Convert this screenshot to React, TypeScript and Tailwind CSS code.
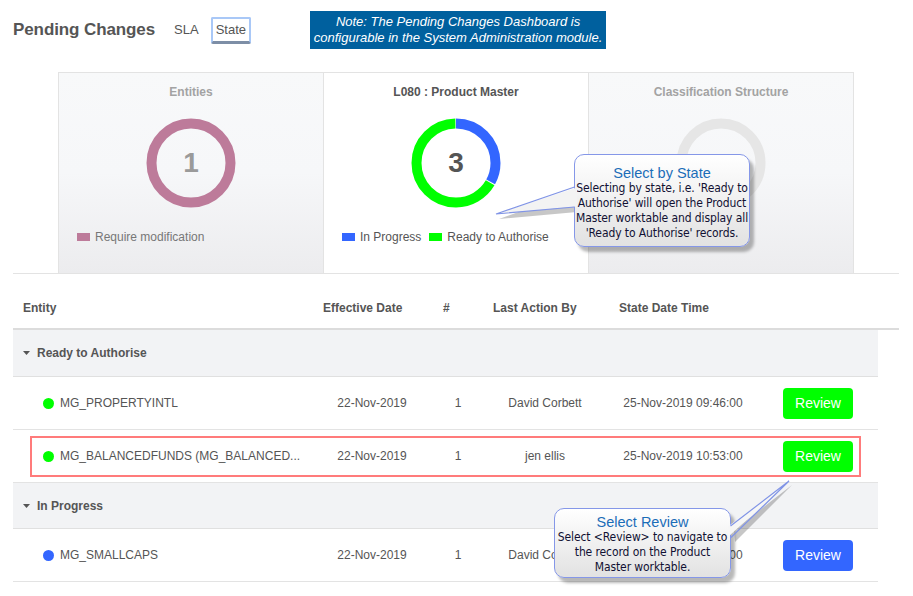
import React from "react";

const GREEN = "#00ff00";
const BLUE = "#3366ff";
const MAUVE = "#bd7b9a";

const C = 2 * Math.PI * 39.5;

function Donut({ kind, value }: { kind: "mauve" | "split" | "empty"; value?: string }) {
  return (
    <div className="relative w-[90px] h-[90px]">
      <svg width="90" height="90" viewBox="0 0 90 90">
        <g transform="rotate(-90 45 45)">
          {kind === "mauve" && (
            <circle cx="45" cy="45" r="39.5" fill="none" stroke={MAUVE} strokeWidth="10" />
          )}
          {kind === "empty" && (
            <circle cx="45" cy="45" r="39.5" fill="none" stroke="#e6e6e6" strokeWidth="10" />
          )}
          {kind === "split" && (
            <>
              <circle
                cx="45"
                cy="45"
                r="39.5"
                fill="none"
                stroke={BLUE}
                strokeWidth="10"
                strokeDasharray={`${C / 3 - 1} ${C}`}
                strokeDashoffset="0"
              />
              <circle
                cx="45"
                cy="45"
                r="39.5"
                fill="none"
                stroke={GREEN}
                strokeWidth="10"
                strokeDasharray={`${(2 * C) / 3 - 1} ${C}`}
                strokeDashoffset={-(C / 3)}
              />
            </>
          )}
        </g>
      </svg>
      {value && (
        <div
          className={`absolute inset-0 flex items-center justify-center text-[28px] font-bold ${
            kind === "split" ? "text-[#555]" : "text-[#9a9a9a]"
          }`}
        >
          {value}
        </div>
      )}
    </div>
  );
}

function Legend({ color, label, dark }: { color: string; label: string; dark?: boolean }) {
  return (
    <div className="flex items-center gap-[5px]">
      <span className="w-[13px] h-[8px]" style={{ backgroundColor: color }} />
      <span className={`text-[12px] leading-[16px] ${dark ? "text-[#555]" : "text-[#777]"}`}>{label}</span>
    </div>
  );
}

function Card({
  title,
  active,
  first,
  children,
}: {
  title: string;
  active?: boolean;
  first?: boolean;
  children: React.ReactNode;
}) {
  return (
    <div
      className={`w-[266px] h-[201px] border border-b-0 border-[#e3e3e3] flex flex-col items-center pt-[11px] ${
        first ? "" : "-ml-px"
      } ${active ? "bg-white" : "bg-gradient-to-b from-[#f8f9fa] via-[#f6f7f9] to-[#ececee]"}`}
    >
      <div
        className={`text-[12px] leading-[16px] font-bold ${active ? "text-[#555]" : "text-[#a3a3a3]"}`}
      >
        {title}
      </div>
      {children}
    </div>
  );
}

function Caret() {
  return (
    <svg width="7" height="4" viewBox="0 0 7 4" className="mr-[7px]">
      <path d="M0 0 L7 0 L3.5 4 Z" fill="#555" />
    </svg>
  );
}

type Row = {
  name: string;
  dot: string;
  date: string;
  n: string;
  by: string;
  time: string;
  btn: string;
  highlight?: boolean;
};

function DataRow({ r }: { r: Row }) {
  return (
    <div className="relative flex items-center h-[53px] border-b border-[#e3e3e3] text-[12px] text-[#555]">
      <div className="w-[310px] flex items-center pl-[30px] gap-[6px] whitespace-nowrap">
        <span className="w-[11px] h-[11px] rounded-full shrink-0" style={{ backgroundColor: r.dot }} />
        <span>{r.name}</span>
      </div>
      <div className="w-[98px] text-center">{r.date}</div>
      <div className="w-[74px] text-center">{r.n}</div>
      <div className="w-[100px] text-center">{r.by}</div>
      <div className="w-[176px] text-center">{r.time}</div>
      <div className="flex-1 pl-[12px]">
        <button
          className="w-[70px] h-[31px] rounded-[4px] text-white text-[14px]"
          style={{ backgroundColor: r.btn }}
        >
          Review
        </button>
      </div>
      {r.highlight && (
        <div className="absolute left-[17px] top-[6px] w-[831px] h-[41px] border-2 border-[#ff7b7b] pointer-events-none" />
      )}
    </div>
  );
}

function GroupRow({ label, h }: { label: string; h: string }) {
  return (
    <div className={`flex items-center ${h} bg-[#f2f3f5] border-b border-[#e0e0e0] pl-[10px]`}>
      <Caret />
      <span className="text-[12px] font-bold text-[#555]">{label}</span>
    </div>
  );
}

function Callout({
  className,
  title,
  lines,
}: {
  className: string;
  title: string;
  lines: string[];
}) {
  return (
    <div
      className={`absolute rounded-[10px] border border-[#8597e8] bg-gradient-to-b from-white to-[#e2e2e2] shadow-[4px_5px_3px_rgba(0,0,0,0.28)] flex flex-col items-center ${className}`}
    >
      <div className="text-[14.5px] leading-[16px] text-[#1b6db8]">{title}</div>
      <div
        className="text-[12px] leading-[15px] tracking-[-0.1px] text-[#111133] text-center whitespace-nowrap"
        style={{ fontFamily: '"DejaVu Sans Condensed", "Liberation Sans", sans-serif' }}
      >
        {lines.map((l, i) => (
          <div key={i}>{l}</div>
        ))}
      </div>
    </div>
  );
}

export default function App() {
  const ready: Row[] = [
    {
      name: "MG_PROPERTYINTL",
      dot: GREEN,
      date: "22-Nov-2019",
      n: "1",
      by: "David Corbett",
      time: "25-Nov-2019 09:46:00",
      btn: GREEN,
    },
    {
      name: "MG_BALANCEDFUNDS (MG_BALANCED...",
      dot: GREEN,
      date: "22-Nov-2019",
      n: "1",
      by: "jen ellis",
      time: "25-Nov-2019 10:53:00",
      btn: GREEN,
      highlight: true,
    },
  ];
  const progress: Row[] = [
    {
      name: "MG_SMALLCAPS",
      dot: BLUE,
      date: "22-Nov-2019",
      n: "1",
      by: "David Corbett",
      time: "25-Nov-2019 09:46:00",
      btn: BLUE,
    },
  ];

  return (
    <div
      className="relative w-[913px] h-[596px] overflow-hidden bg-white"
      style={{ fontFamily: '"Liberation Sans", Arial, sans-serif' }}
    >
      {/* Header */}
      <div className="h-[60px] flex items-center pl-[13px]">
        <h1 className="text-[17px] font-bold text-[#555] tracking-[-0.1px]">Pending Changes</h1>
        <span className="ml-[19px] text-[13px] text-[#555]">SLA</span>
        <button className="ml-[12px] h-[27px] px-[3px] text-[13px] text-[#555] border-2 border-[#a9c8f7] border-b-[3px] border-b-[#7d8ea6] rounded-[2px]">
          State
        </button>
        <div className="ml-[59px] w-[296px] h-[38px] bg-[#00609e] text-white italic text-[13px] leading-[16px] flex flex-col items-center justify-center">
          <span>Note: The Pending Changes Dashboard is</span>
          <span>configurable in the System Administration module.</span>
        </div>
      </div>

      {/* Cards */}
      <div className="mt-[12px] mx-[13px] w-[886px] border-b border-[#e3e3e3] pl-[45px] flex">
        <Card title="Entities" first>
          <div className="mt-[18px]">
            <Donut kind="mauve" value="1" />
          </div>
          <div className="mt-[21px] self-stretch pl-[18px] flex">
            <Legend color={MAUVE} label="Require modification" />
          </div>
        </Card>
        <Card title="L080 : Product Master" active>
          <div className="mt-[18px]">
            <Donut kind="split" value="3" />
          </div>
          <div className="mt-[21px] self-stretch pl-[18px] flex gap-[8px]">
            <Legend color={BLUE} label="In Progress" dark />
            <Legend color={GREEN} label="Ready to Authorise" dark />
          </div>
        </Card>
        <Card title="Classification Structure">
          <div className="mt-[18px]">
            <Donut kind="empty" />
          </div>
        </Card>
      </div>

      {/* Table */}
      <div className="mx-[13px]">
        <div className="w-[886px] flex pt-[26px] pb-[12px] border-b-2 border-[#dcdcdc] text-[12px] leading-[16px] font-bold text-[#555]">
          <div className="w-[310px] pl-[10px]">Entity</div>
          <div className="w-[120px]">Effective Date</div>
          <div className="w-[50px]">#</div>
          <div className="w-[126px]">Last Action By</div>
          <div>State Date Time</div>
        </div>
        <div className="w-[865px]">
          <GroupRow label="Ready to Authorise" h="h-[47px]" />
          {ready.map((r) => (
            <DataRow key={r.name} r={r} />
          ))}
          <GroupRow label="In Progress" h="h-[46px]" />
          {progress.map((r) => (
            <DataRow key={r.name} r={r} />
          ))}
        </div>
      </div>

      {/* Callout shadows for pointers */}
      <svg className="absolute inset-0 pointer-events-none" width="913" height="596">
        <polygon points="577,191 499,219 577,212" fill="rgba(0,0,0,0.22)" />
        <polygon points="734,530 792,485 735,542" fill="rgba(0,0,0,0.22)" />
      </svg>
      <Callout
        className="left-[574px] top-[154px] w-[176px] h-[93px] pt-[10px]"
        title="Select by State"
        lines={[
          "Selecting by state, i.e. 'Ready to",
          "Authorise' will open the Product",
          "Master worktable and display all",
          "'Ready to Authorise' records.",
        ]}
      />
      <Callout
        className="left-[554px] top-[508px] w-[177px] h-[70px] pt-[5px]"
        title="Select Review"
        lines={["Select <Review> to navigate to", "the record on the Product", "Master worktable."]}
      />
      <svg className="absolute inset-0 pointer-events-none" width="913" height="596">
        <polygon points="577,187.5 496,214 577,206.5" fill="#f3f3f3" />
        <path d="M574.5 187 L496 214 L574.5 207" fill="none" stroke="#8094e6" strokeWidth="1.2" />
        <polygon points="728,526.5 789,481 728,537" fill="#f6f6f6" />
        <path d="M730.5 526 L789 481 L731 537.5" fill="none" stroke="#8094e6" strokeWidth="1.2" />
      </svg>
    </div>
  );
}
